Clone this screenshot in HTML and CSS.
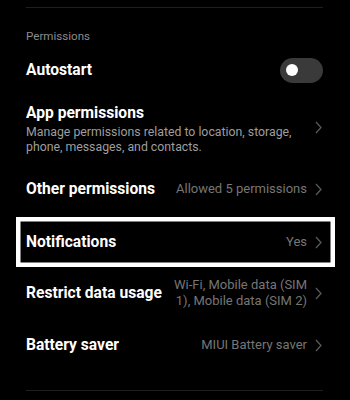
FILE: index.html
```html
<!DOCTYPE html>
<html>
<head>
<meta charset="utf-8">
<link rel="stylesheet" href="styles.css">
</head>
<body>
<div class="screen">
  <div class="divider top"></div>
  <div class="section-label">Permissions</div>

  <div class="row">
    <div class="title">Autostart</div>
    <div class="toggle"><span class="knob"></span></div>
  </div>

  <div class="row tall">
    <div class="text">
      <div class="title">App permissions</div>
      <div class="sub">Manage permissions related to location, storage, phone, messages, and contacts.</div>
    </div>
    <svg class="chev" viewBox="0 0 7 13"><path d="M1 1 L6 6.5 L1 12"/></svg>
  </div>

  <div class="row">
    <div class="title">Other permissions</div>
    <div class="value">Allowed 5 permissions</div>
    <svg class="chev" viewBox="0 0 7 13"><path d="M1 1 L6 6.5 L1 12"/></svg>
  </div>

  <div class="row highlight">
    <div class="title">Notifications</div>
    <div class="value">Yes</div>
    <svg class="chev" viewBox="0 0 7 13"><path d="M1 1 L6 6.5 L1 12"/></svg>
  </div>

  <div class="row">
    <div class="title">Restrict data usage</div>
    <div class="value multi">Wi-Fi, Mobile data (SIM<br>1), Mobile data (SIM 2)</div>
    <svg class="chev" viewBox="0 0 7 13"><path d="M1 1 L6 6.5 L1 12"/></svg>
  </div>

  <div class="row">
    <div class="title">Battery saver</div>
    <div class="value">MIUI Battery saver</div>
    <svg class="chev" viewBox="0 0 7 13"><path d="M1 1 L6 6.5 L1 12"/></svg>
  </div>

  <div class="divider bottom"></div>
</div>
</body>
</html>
```

FILE: styles.css
```css
html, body {
  margin: 0;
  padding: 0;
  background: #000;
}
.screen {
  width: 350px;
  height: 400px;
  overflow: hidden;
  background: #000;
  font-family: Roboto, "Noto Sans", sans-serif;
  color: #fff;
  padding-top: 7px;
  box-sizing: border-box;
}
.divider {
  height: 1px;
  background: #1f1f1f;
  margin: 0 27px 0 26px;
}
.divider.bottom {
  margin-top: 19px;
}
.section-label {
  margin: 20px 26px 0;
  font-size: 11.6px;
  line-height: 16px;
  color: #8c8c8c;
}
.row {
  display: flex;
  align-items: center;
  height: 52px;
  margin: 0 15px 0 16px;
  padding: 0 13px 0 10px;
  box-sizing: border-box;
}
.row.tall {
  height: 67px;
  align-items: flex-start;
  padding-top: 7px;
}
.row.highlight {
  height: 50px;
  margin-top: 2px;
  box-shadow: inset 0 0 0 4.5px #fff;
}
.text {
  flex: 1;
}
.title {
  font-size: 15.6px;
  font-weight: 700;
  line-height: 20px;
  white-space: nowrap;
  flex: 1;
}
.sub {
  margin-top: 2px;
  font-size: 12.3px;
  line-height: 15px;
  color: #9e9e9e;
  padding-right: 4px;
}
.value {
  font-size: 13px;
  line-height: 16px;
  color: #767676;
  text-align: right;
  white-space: nowrap;
  margin-right: 8px;
}
.tall .chev {
  margin-top: 18px;
}
.chev {
  width: 7px;
  height: 13px;
  flex: none;
  fill: none;
  stroke: #5c5c5c;
  stroke-width: 1.2;
}
.toggle {
  width: 43px;
  height: 25px;
  border-radius: 13px;
  background: #3a3a3a;
  margin-right: -1px;
  display: flex;
  align-items: center;
  padding-left: 6px;
  box-sizing: border-box;
}
.knob {
  width: 12px;
  height: 12px;
  border-radius: 50%;
  background: #fff;
}
```
